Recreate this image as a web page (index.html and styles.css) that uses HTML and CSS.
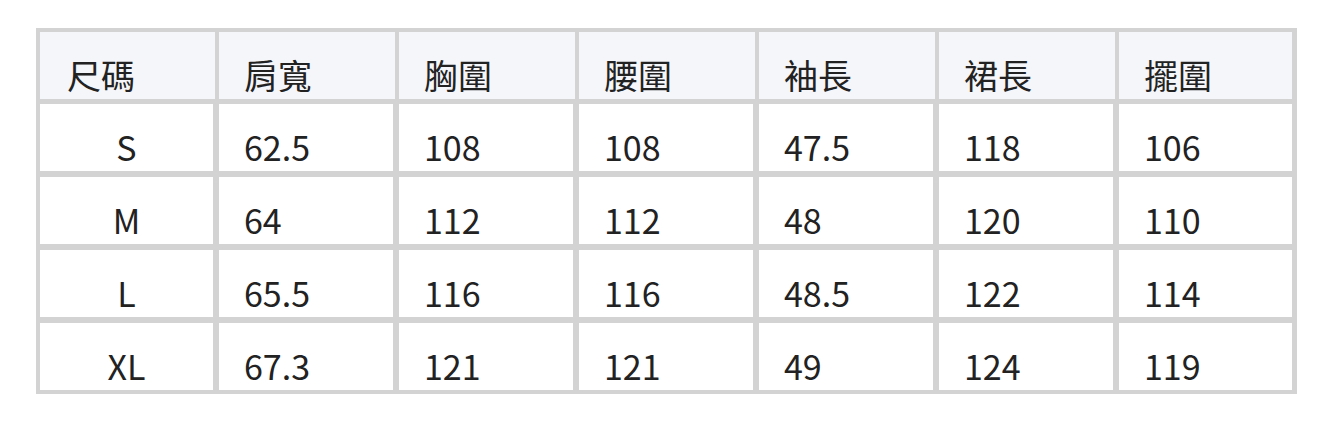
FILE: index.html
```html
<!DOCTYPE html>
<html lang="zh-Hant">
<head>
<meta charset="utf-8">
<title>尺碼表</title>
<link rel="stylesheet" href="styles.css">
</head>
<body>
<div class="page">
  <div class="size-table">
    <div class="row head">
      <div class="cell first">尺碼</div>
      <div class="cell">肩寬</div>
      <div class="cell">胸圍</div>
      <div class="cell">腰圍</div>
      <div class="cell">袖長</div>
      <div class="cell">裙長</div>
      <div class="cell">擺圍</div>
    </div>
    <div class="row body">
      <div class="cell first">S</div>
      <div class="cell">62.5</div>
      <div class="cell">108</div>
      <div class="cell">108</div>
      <div class="cell">47.5</div>
      <div class="cell">118</div>
      <div class="cell">106</div>
    </div>
    <div class="row body">
      <div class="cell first">M</div>
      <div class="cell">64</div>
      <div class="cell">112</div>
      <div class="cell">112</div>
      <div class="cell">48</div>
      <div class="cell">120</div>
      <div class="cell">110</div>
    </div>
    <div class="row body">
      <div class="cell first">L</div>
      <div class="cell">65.5</div>
      <div class="cell">116</div>
      <div class="cell">116</div>
      <div class="cell">48.5</div>
      <div class="cell">122</div>
      <div class="cell">114</div>
    </div>
    <div class="row body last">
      <div class="cell first">XL</div>
      <div class="cell">67.3</div>
      <div class="cell">121</div>
      <div class="cell">121</div>
      <div class="cell">49</div>
      <div class="cell">124</div>
      <div class="cell">119</div>
    </div>
  </div>
</div>
</body>
</html>
```
FILE: styles.css
```css
html, body {
  margin: 0;
  padding: 0;
  background: #ffffff;
}

.page {
  padding: 28px 0 0 36px;
}

.size-table {
  width: 1261px;
  box-sizing: border-box;
  border: 4px solid #d3d3d3;
  background: #d3d3d3;
  font-family: "Noto Sans CJK TC", "Noto Sans", sans-serif;
  font-size: 34px;
  line-height: 34px;
  color: #222222;
}

.row {
  display: grid;
  grid-template-columns: 179px 180px 180px 180px 180px 180px 173px;
  height: 72px;
  box-sizing: border-box;
}

.row.head {
  border-bottom: 5px solid #d3d3d3;
}

.row.body {
  height: 73px;
  border-bottom: 6px solid #d3d3d3;
}

.row.body.last {
  height: 67px;
  border-bottom: 0;
}

.cell {
  display: flex;
  align-items: flex-end;
  box-sizing: border-box;
  padding: 0 0 7px 25px;
  white-space: nowrap;
}

.head .cell {
  background: #f5f6fa;
  border-right: 4px solid #d3d3d3;
}

.body .cell {
  background: #ffffff;
  border-right: 6px solid #d3d3d3;
}

.row .cell:last-child {
  border-right: 0;
}

.head .cell.first {
  padding-left: 27px;
}

.body .cell.first {
  justify-content: center;
  padding-left: 0;
}
```
